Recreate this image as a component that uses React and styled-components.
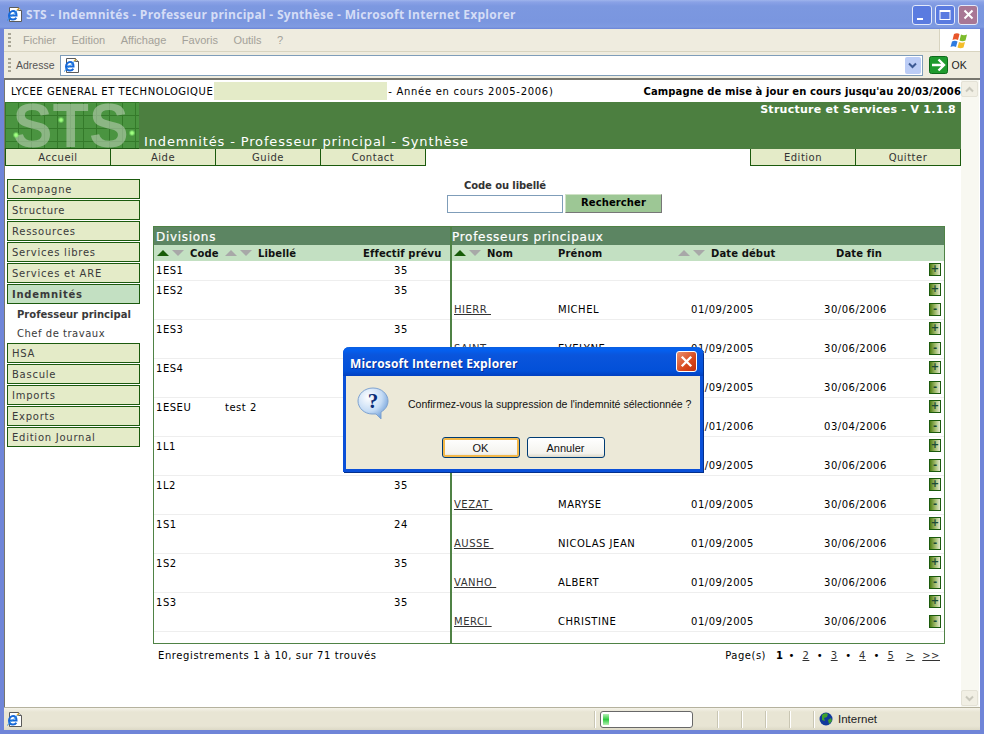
import React from "react"
import styled, { createGlobalStyle } from "styled-components"

const Global = createGlobalStyle`
  html, body { margin: 0; padding: 0; background: #6f85d8; }
  body { font-family: "DejaVu Sans", Verdana, sans-serif; font-size: 10px; }
  #root { width: 984px; height: 734px; overflow: hidden; }
  * { box-sizing: border-box; }
`

const Win = styled.div`
  width: 984px;
  height: 734px;
  position: relative;
  display: flex;
  flex-direction: column;
  background: #6f85d8;
  padding: 0 4px 4px 4px;
`

const TitleBar = styled.div`
  height: 29px;
  margin: 0 -4px;
  padding: 0 6px 0 6px;
  display: flex;
  align-items: center;
  gap: 3px;
  background: linear-gradient(#9fb4ec 0, #8aa2e6 2px, #7c98e0 6px, #7a96df 22px, #7f9be2 27px, #6a84d6 29px);
`

const TitleText = styled.div`
  flex: 1;
  font-family: "Open Sans", sans-serif;
  font-weight: 700;
  font-size: 12px;
  letter-spacing: 0.28px;
  color: #d5ddf6;
  white-space: nowrap;
`

const WinBtn = styled.div`
  width: 20px;
  height: 20px;
  border: 1px solid #e3e9fa;
  border-radius: 3px;
  background: ${p => (p.$close ? "#a87795" : "#5a7be0")};
  display: flex;
  align-items: center;
  justify-content: center;
`

const MenuBar = styled.div`
  height: 23px;
  display: flex;
  align-items: center;
  background: #efecdf;
  border-bottom: 1px solid #d8d4c0;
  color: #a3a199;
  font-family: "Liberation Sans", sans-serif;
  font-size: 11px;
`

const Grip = styled.div`
  width: 3px;
  height: 15px;
  margin: 0 12px 0 4px;
  background: repeating-linear-gradient(#a8a595 0 2px, transparent 2px 4px);
`

const MenuItem = styled.span`
  margin-right: 15.5px;
`

const MenuFill = styled.div`
  flex: 1;
`

const FlagBox = styled.div`
  width: 41px;
  height: 22px;
  background: #fff;
  display: flex;
  align-items: center;
  justify-content: center;
  border-left: 1px solid #d8d4c0;
`

const AddressBar = styled.div`
  height: 26px;
  display: flex;
  align-items: center;
  background: #efecdf;
  font-family: "Liberation Sans", sans-serif;
  font-size: 10.5px;
  color: #555;
`

const AddressGrip = styled(Grip)`
  margin-right: 5px;
`

const AddressField = styled.div`
  margin-left: 5px;
  width: 863px;
  height: 21px;
  background: #fff;
  border: 1px solid #7f9db9;
  display: flex;
  align-items: center;
  justify-content: space-between;
  padding: 0 1px 0 2px;
`

const ComboBtn = styled.div`
  width: 16px;
  height: 17px;
  border-radius: 2px;
  background: #bccdf6;
  display: flex;
  align-items: center;
  justify-content: center;
`

const GoBtn = styled.div`
  display: flex;
  align-items: center;
  gap: 4px;
  margin-left: 6px;
  color: #222;
`

const Content = styled.div`
  flex: 1;
  min-height: 0;
  display: flex;
  background: #fff;
  border-top: 2px solid #77766e;
  border-left: 1px solid #77766e;
`

const Page = styled.div`
  width: 956px;
  display: flex;
  flex-direction: column;
  color: #000;
  letter-spacing: 0.52px;
`

const InfoRow = styled.div`
  height: 22px;
  display: flex;
  align-items: center;
  padding-left: 6px;
  white-space: nowrap;
  letter-spacing: 0.55px;
`

const School = styled.span`
  display: inline-block;
  width: 173px;
  height: 18px;
  margin: 0 1px 0 1px;
  background: #e4ebc8;
`

const Year = styled.span`
  white-space: pre;
  letter-spacing: 0.7px;
`

const Campaign = styled.b`
  margin-left: auto;
  letter-spacing: 0.1px;
`

const Banner = styled.div`
  height: 47px;
  display: flex;
  background: #4c7f40;
  color: #fff;
`

const BannerTitle = styled.div`
  align-self: flex-end;
  margin-left: 5px;
  font-size: 13px;
  line-height: 15px;
  letter-spacing: 0.85px;
  white-space: nowrap;
  flex: 1;
`

const Version = styled.div`
  font-weight: 700;
  font-size: 11px;
  padding: 1px 5px 0 0;
  letter-spacing: 0.27px;
  white-space: nowrap;
`

const Tabs = styled.div`
  height: 17px;
  display: flex;
  justify-content: space-between;
`

const TabGroup = styled.div`
  display: flex;
`

const Tab = styled.div`
  width: ${p => (p.$first ? 106 : 105)}px;
  height: 17px;
  background: #e4ebc8;
  border-right: 1px solid #1b5a0d;
  border-bottom: 1px solid #1b5a0d;
  ${p => p.$first && "border-left: 1px solid #1b5a0d;"}
  color: #333;
  text-align: center;
  line-height: 18px;
`

const Body = styled.div`
  flex: 1;
  display: flex;
`

const Side = styled.div`
  width: 133px;
  margin: 13px 0 0 2px;
  color: #3a3a3a;
`

const SideItem = styled.div`
  height: 20px;
  margin-bottom: 1px;
  padding-left: 4px;
  line-height: 19.5px;
  border: 1px solid #1b5a0d;
  background: ${p => (p.$active ? "#c3e0c2" : "#e4ebc8")};
  font-weight: ${p => (p.$active ? 700 : 400)};
  letter-spacing: 0.75px;
`

const SubItem = styled.div`
  height: 19px;
  padding-left: 10px;
  line-height: 19px;
  white-space: nowrap;
  font-weight: ${p => (p.$active ? 700 : 400)};
  letter-spacing: ${p => (p.$active ? 0 : 0.52)}px;
`

const Main = styled.div`
  margin-left: 13px;
  width: 792px;
  display: flex;
  flex-direction: column;
`

const Search = styled.div`
  height: 47px;
  margin-top: 13px;
  padding-left: 294px;
  display: grid;
  grid-template-columns: 118px 97px;
  grid-template-rows: 15px 19px;
  align-items: center;
`

const SearchLabel = styled.label`
  grid-column: 1 / 3;
  padding: 0 0 2px 17px;
  font-weight: 700;
  color: #333;
  letter-spacing: -0.1px;
`

const SearchInput = styled.input`
  width: 116px;
  height: 18px;
  border: 1px solid #7f9db9;
  padding: 0;
  background: #fff;
`

const SearchBtn = styled.button`
  width: 97px;
  height: 19px;
  padding: 0 0 2px;
  border: 1px solid;
  border-color: #cfe2c6 #777 #777 #cfe2c6;
  background: #9dc795;
  font: 700 10px "DejaVu Sans", sans-serif;
  letter-spacing: 0.1px;
  color: #000;
`

const Table = styled.div`
  height: 418px;
  display: flex;
  border: 1px solid #4f8245;
  border-top: 0;
`

const Panel = styled.div`
  width: ${p => p.$w}px;
  ${p => p.$line && "border-right: 2px solid #4f8245;"}
`

const PanelTitle = styled.div`
  height: 19px;
  background: #5c8562;
  border-top: 1px solid #4f8245;
  color: #fff;
  font-size: 12px;
  line-height: 20px;
  padding-left: ${p => p.$pad}px;
  letter-spacing: 0.7px;
  -webkit-text-stroke: 0.2px #fff;
`

const Heads = styled.div`
  height: 16px;
  background: #c3e0c2;
  display: grid;
  grid-template-columns: ${p => p.$cols};
  align-items: center;
  font-weight: 700;
  color: #111;
  letter-spacing: 0.12px;
  white-space: nowrap;
`

const Head = styled.div`
  display: flex;
  align-items: center;
  gap: 6px;
`

const Arrows = styled.span`
  display: inline-flex;
  gap: 3px;
`

const Arrow = styled.i`
  width: 0;
  height: 0;
  border-left: 6px solid transparent;
  border-right: 6px solid transparent;
  ${p => (p.$down ? "border-top" : "border-bottom")}: 6px solid ${p => p.$color};
`

const LeftRow = styled.div`
  height: ${p => (p.$first ? 20 : 39)}px;
  border-bottom: 1px solid #eeeeee;
  display: grid;
  grid-template-columns: 69px 169px auto;
  padding: 4px 0 0 2px;
`

const RightRow = styled.div`
  height: ${p => (p.$first ? 20 : 39)}px;
  border-bottom: 1px solid #eeeeee;
  display: grid;
  grid-template-columns: 104px 133px 133px 105px 12px;
  padding-left: 2px;
  align-items: end;
`

const Cell = styled.div`
  padding-bottom: 4px;
  white-space: nowrap;
`

const NameLink = styled.a`
  color: #333;
  text-decoration: underline;
  white-space: pre;
`

const Toggles = styled.div`
  display: flex;
  flex-direction: column;
  justify-content: space-between;
  height: 100%;
  padding: 2px 0 3px;
`

const Toggle = styled.div`
  width: 12px;
  height: 13px;
  border: 1px solid #1b5a0d;
  background: linear-gradient(90deg, #4e7d14, #9db868 50%, #e4ead0);
  color: #1d4a34;
  font: 700 10px/10px "DejaVu Sans", sans-serif;
  text-align: center;
  letter-spacing: 0;
`

const Foot = styled.div`
  display: flex;
  justify-content: space-between;
  padding: 6px 5px 0;
`

const FootText = styled.span`
  letter-spacing: 0.6px;
`

const Pager = styled.div`
  display: flex;
  gap: 7.5px;
`

const CurrentPage = styled.b`
  margin: 0 -2.5px 0 2.5px;
`

const PageLink = styled.a`
  color: #333;
  text-decoration: underline;
  margin-left: ${p => p.$gap || 0}px;
`

const ScrollBar = styled.div`
  width: 18px;
  background: #f8f8f1;
  display: flex;
  flex-direction: column;
  justify-content: space-between;
  padding: 1px 0 1px;
`

const ScrollBtn = styled.div`
  width: 17px;
  height: 16px;
  background: #f1efe4;
  border: 1px solid #e4e2d6;
  border-radius: 2px;
  display: flex;
  align-items: center;
  justify-content: center;
`

const StatusBar = styled.div`
  height: 23px;
  display: flex;
  align-items: center;
  background: linear-gradient(#f4f2e8, #e8e5d4 4px, #e8e5d4 18px, #dcd9c6);
  border-top: 1px solid #b5b29e;
  font-family: "Liberation Sans", sans-serif;
  font-size: 11.5px;
  color: #222;
`

const StatusIcon = styled.div`
  width: 590px;
  padding-left: 2px;
  display: flex;
  align-items: center;
`

const Sep = styled.span`
  width: 1px;
  height: 17px;
  background: #c9c6b3;
  box-shadow: 1px 0 #fff;
  margin-right: ${p => p.$m}px;
`

const Progress = styled.div`
  width: 93px;
  height: 17px;
  margin-right: 24px;
  border: 1px solid #686868;
  border-radius: 3px;
  background: #fff;
  padding: 2px;
`

const ProgressFill = styled.div`
  width: 6px;
  height: 100%;
  background: linear-gradient(#b5f0b5, #2ecb3f 50%, #b5f0b5);
`

const Zone = styled.div`
  flex: 1;
  display: flex;
  align-items: center;
  gap: 5px;
`

const Dialog = styled.div`
  position: absolute;
  left: 343px;
  top: 347px;
  width: 360px;
  height: 125px;
  background: #ece9d8;
  border: 3px solid #0a50d8;
  border-top: 0;
  border-radius: 6px 6px 0 0;
  box-shadow: 1px 1px 0 #04308c;
`

const DialogTitle = styled.div`
  height: 29px;
  margin: 0 -3px;
  padding: 0 6px 0 7px;
  display: flex;
  align-items: center;
  justify-content: space-between;
  border-radius: 6px 6px 0 0;
  background: linear-gradient(#0a5fe0, #0460f0 3px, #0a55dc 8px, #0250d8 24px, #0240c0);
  color: #fff;
  font-family: "Open Sans", sans-serif;
  font-weight: 700;
  font-size: 12px;
  letter-spacing: 0.15px;
  text-shadow: 1px 1px 0 #0a2f96;
`

const DialogCaption = styled.span`
  padding-top: 3px;
`

const CloseBtn = styled.div`
  width: 21px;
  height: 21px;
  border: 1px solid #fff;
  border-radius: 3px;
  background: linear-gradient(135deg, #e89070, #d8481c 60%, #c03010);
  display: flex;
  align-items: center;
  justify-content: center;
`

const DialogBody = styled.div`
  display: flex;
  align-items: center;
  gap: 19px;
  padding: 11px 0 0 11px;
  font-family: "Liberation Sans", sans-serif;
  font-size: 10.55px;
  color: #111;
  white-space: nowrap;
`

const DialogBtns = styled.div`
  display: flex;
  justify-content: center;
  gap: 7px;
  margin-top: 17px;
`

const DialogBtn = styled.button`
  width: 78px;
  height: 21px;
  padding: 0;
  border: 1px solid #003c74;
  border-radius: 3px;
  background: linear-gradient(#ffffff, #f4f3ee 80%, #dcd8c8);
  font-family: "Liberation Sans", sans-serif;
  font-size: 11px;
  color: #111;
  ${p => p.$focus && "box-shadow: inset 0 0 0 2px #f2b84a;"}
`

const IeIcon = ({ size = 17 }) => (
  <svg width={size} height={size} viewBox="0 0 17 17">
    <path d="M3.500 1.500h9l3 3v11h-12z" fill="#fff" stroke="#5a5a5a" />
    <path d="M12.500 1.500v3h3" fill="#d8d8d8" stroke="#5a5a5a" />
    <path d="M3 9.500h7.500c0-3-1.500-4.500-3.500-4.500S3 7 3 9.500s1.700 4 4 4c1.500 0 2.700-.7 3.300-1.800" fill="none" stroke="#1668d8" strokeWidth="2" />
    <path d="M1 14.500C3 13 9 6 12.500 3.500" fill="none" stroke="#2f8fe8" strokeWidth="1" />
    <path d="M11 4l2-1.500" stroke="#e8a820" strokeWidth="1.500" />
  </svg>
)

const StsLogo = () => (
  <svg width="134" height="47" viewBox="0 0 134 47">
    <defs>
      <pattern id="stsgrid" width="13" height="13" patternUnits="userSpaceOnUse">
        <rect width="13" height="13" fill="#4a9440" />
        <path d="M0 .5h13M.5 0v13" stroke="#347a2a" />
      </pattern>
      <radialGradient id="stsdot">
        <stop offset="0.35" stopColor="#a0ff80" />
        <stop offset="1" stopColor="#6fe060" stopOpacity="0" />
      </radialGradient>
    </defs>
    <rect width="134" height="47" fill="url(#stsgrid)" />
    <text x="8" y="45" fontFamily="Liberation Sans, sans-serif" fontWeight="700" fontSize="63" fill="#b5ccae" fillOpacity="0.62" textLength="116" lengthAdjust="spacingAndGlyphs">STS</text>
    <circle cx="56" cy="18" r="3.500" fill="url(#stsdot)" />
    <circle cx="11" cy="33" r="3.500" fill="url(#stsdot)" />
    <circle cx="127" cy="31" r="3.500" fill="url(#stsdot)" />
    <path d="M0 46.500h134" stroke="#1f5a14" />
  </svg>
)

const Flag = () => (
  <svg width="20" height="19" viewBox="0 0 20 19">
    <path d="M4 3c2-1 4-1 5.500 0l-1.500 6c-2-1-3.500-1-5.500 0z" fill="#e8562a" />
    <path d="M11 3.500c2 1 4 1 6 0l-1.500 6c-2 1-4 1-6 0z" fill="#7dbb2c" />
    <path d="M2 10.500c2-1 3.500-1 5.500 0L6 16c-2-1-3.500-1-5.500 0z" fill="#2f7be0" />
    <path d="M9 11c2 1 4 1 6 0l-1.500 5.500c-2 1-4 1-6 0z" fill="#f4bd2a" />
  </svg>
)

const GoIcon = () => (
  <svg width="19" height="18" viewBox="0 0 19 18">
    <rect x="0.500" y="0.500" width="18" height="17" rx="2" fill="#1f9a2e" stroke="#0d6a1a" />
    <path d="M3 9h11M9.500 3.500L15 9l-5.500 5.500" stroke="#fff" strokeWidth="2.400" fill="none" />
  </svg>
)

const Chevron = ({ up, color }) => (
  <svg width="9" height="7" viewBox="0 0 9 7">
    <path d={up ? "M1 5.500L4.500 2 8 5.500" : "M1 1.500L4.500 5 8 1.500"} stroke={color} strokeWidth="2" fill="none" />
  </svg>
)

const Cross = ({ size = 11 }) => (
  <svg width={size} height={size} viewBox="0 0 11 11">
    <path d="M1.500 1.500l8 8M9.500 1.500l-8 8" stroke="#fff" strokeWidth="2" />
  </svg>
)

const Question = () => (
  <svg width="32" height="33" viewBox="0 0 32 33">
    <defs>
      <radialGradient id="bal" cx="35%" cy="30%" r="75%">
        <stop offset="0" stopColor="#ffffff" />
        <stop offset="0.6" stopColor="#c5dcf5" />
        <stop offset="1" stopColor="#6f9ed8" />
      </radialGradient>
    </defs>
    <path d="M16 1C7.500 1 1 7 1 14s6.500 13 14 13h4l5 5 0-7c4.500-2.500 7-6.500 7-11C31 7 24.500 1 16 1z" fill="url(#bal)" stroke="#7fa3d0" />
    <text x="16" y="21" fontFamily="Liberation Serif, serif" fontWeight="700" fontSize="21" fill="#0a2d78" textAnchor="middle">?</text>
  </svg>
)

const Globe = () => (
  <svg width="14" height="14" viewBox="0 0 14 14">
    <circle cx="7" cy="7" r="6.500" fill="#123a9c" />
    <path d="M3 3c2-2 5-2 6-1L8 5 5 6 6 9 3 8zM9 8l3-2 1 3-3 3z" fill="#3fa02c" />
  </svg>
)

const Sort = ({ active }) => (
  <Arrows>
    <Arrow $color={active ? "#175c08" : "#a8a8a8"} />
    <Arrow $down $color="#a8a8a8" />
  </Arrows>
)

const sideTop = ["Campagne", "Structure", "Ressources", "Services libres", "Services et ARE"]
const sideBottom = ["HSA", "Bascule", "Imports", "Exports", "Edition Journal"]

const divisions = [
  ["1ES1", "", "35"],
  ["1ES2", "", "35"],
  ["1ES3", "", "35"],
  ["1ES4", "", ""],
  ["1ESEU", "test 2", ""],
  ["1L1", "", ""],
  ["1L2", "", "35"],
  ["1S1", "", "24"],
  ["1S2", "", "35"],
  ["1S3", "", "35"],
]

const profs = [
  null,
  ["HIERR ", "MICHEL", "01/09/2005", "30/06/2006"],
  ["SAINT ", "EVELYNE", "01/09/2005", "30/06/2006"],
  ["", "", "01/09/2005", "30/06/2006"],
  ["", "", "01/01/2006", "03/04/2006"],
  ["", "", "01/09/2005", "30/06/2006"],
  ["VEZAT ", "MARYSE", "01/09/2005", "30/06/2006"],
  ["AUSSE ", "NICOLAS JEAN", "01/09/2005", "30/06/2006"],
  ["VANHO ", "ALBERT", "01/09/2005", "30/06/2006"],
  ["MERCI ", "CHRISTINE", "01/09/2005", "30/06/2006"],
]

export default function App() {
  return (
    <Win>
      <Global />
      <TitleBar>
        <IeIcon />
        <TitleText>STS - Indemnités - Professeur principal - Synthèse - Microsoft Internet Explorer</TitleText>
        <WinBtn>
          <svg width="12" height="12" viewBox="0 0 12 12"><rect x="1" y="9" width="6" height="2" fill="#fff" /></svg>
        </WinBtn>
        <WinBtn>
          <svg width="12" height="12" viewBox="0 0 12 12"><rect x="1" y="1.500" width="10" height="9" fill="none" stroke="#fff" /><rect x="1" y="1" width="10" height="2" fill="#fff" /></svg>
        </WinBtn>
        <WinBtn $close><Cross /></WinBtn>
      </TitleBar>
      <MenuBar>
        <Grip />
        {["Fichier", "Edition", "Affichage", "Favoris", "Outils", "?"].map(m => (
          <MenuItem key={m}>{m}</MenuItem>
        ))}
        <MenuFill />
        <FlagBox><Flag /></FlagBox>
      </MenuBar>
      <AddressBar>
        <AddressGrip />
        Adresse
        <AddressField>
          <IeIcon />
          <ComboBtn><Chevron color="#3d5a94" /></ComboBtn>
        </AddressField>
        <GoBtn><GoIcon />OK</GoBtn>
      </AddressBar>
      <Content>
        <Page>
          <InfoRow>
            LYCEE GENERAL ET TECHNOLOGIQUE<School /><Year>- Année en cours 2005-2006)</Year>
            <Campaign>Campagne de mise à jour en cours jusqu'au 20/03/2006</Campaign>
          </InfoRow>
          <Banner>
            <StsLogo />
            <BannerTitle>Indemnités - Professeur principal - Synthèse</BannerTitle>
            <Version>Structure et Services - V 1.1.8</Version>
          </Banner>
          <Tabs>
            <TabGroup>
              {["Accueil", "Aide", "Guide", "Contact"].map((t, i) => (
                <Tab key={t} $first={i === 0}>{t}</Tab>
              ))}
            </TabGroup>
            <TabGroup>
              <Tab $first>Edition</Tab>
              <Tab>Quitter</Tab>
            </TabGroup>
          </Tabs>
          <Body>
            <Side>
              {sideTop.map(s => <SideItem key={s}>{s}</SideItem>)}
              <SideItem $active>Indemnités</SideItem>
              <SubItem $active>Professeur principal</SubItem>
              <SubItem>Chef de travaux</SubItem>
              {sideBottom.map(s => <SideItem key={s}>{s}</SideItem>)}
            </Side>
            <Main>
              <Search>
                <SearchLabel>Code ou libellé</SearchLabel>
                <SearchInput />
                <SearchBtn>Rechercher</SearchBtn>
              </Search>
              <Table>
                <Panel $w={298} $line>
                  <PanelTitle $pad={2}>Divisions</PanelTitle>
                  <Heads $cols="3px 68px 138px auto">
                    <span />
                    <Head><Sort active />Code</Head>
                    <Head><Sort />Libellé</Head>
                    <Head>Effectif prévu</Head>
                  </Heads>
                  {divisions.map((d, i) => (
                    <LeftRow key={d[0]} $first={i === 0}>
                      <span>{d[0]}</span>
                      <span>{d[1]}</span>
                      <span>{d[2]}</span>
                    </LeftRow>
                  ))}
                </Panel>
                <Panel $w={492}>
                  <PanelTitle $pad={0}>Professeurs principaux</PanelTitle>
                  <Heads $cols="2px 104px 120px 158px auto">
                    <span />
                    <Head><Sort active />Nom</Head>
                    <Head>Prénom</Head>
                    <Head><Sort />Date début</Head>
                    <Head>Date fin</Head>
                  </Heads>
                  {profs.map((p, i) => (
                    <RightRow key={i} $first={i === 0}>
                      <Cell>{p && <NameLink>{p[0]}</NameLink>}</Cell>
                      <Cell>{p && p[1]}</Cell>
                      <Cell>{p && p[2]}</Cell>
                      <Cell>{p && p[3]}</Cell>
                      <Toggles>
                        <Toggle>+</Toggle>
                        {p && <Toggle>-</Toggle>}
                      </Toggles>
                    </RightRow>
                  ))}
                </Panel>
              </Table>
              <Foot>
                <FootText>Enregistrements 1 à 10, sur 71 trouvés</FootText>
                <Pager>
                  <span>Page(s)</span>
                  <CurrentPage>1</CurrentPage>•<PageLink>2</PageLink>•<PageLink>3</PageLink>•<PageLink>4</PageLink>•<PageLink>5</PageLink>
                  <PageLink $gap={4}>&gt;</PageLink>
                  <PageLink>&gt;&gt;</PageLink>
                </Pager>
              </Foot>
            </Main>
          </Body>
        </Page>
        <ScrollBar>
          <ScrollBtn><Chevron up color="#c9c8bc" /></ScrollBtn>
          <ScrollBtn><Chevron color="#c9c8bc" /></ScrollBtn>
        </ScrollBar>
      </Content>
      <StatusBar>
        <StatusIcon><IeIcon /></StatusIcon>
        <Sep $m={5} />
        <Progress><ProgressFill /></Progress>
        <Sep $m={23} />
        <Sep $m={23} />
        <Sep $m={23} />
        <Sep $m={23} />
        <Sep $m={5} />
        <Zone><Globe />Internet</Zone>
      </StatusBar>
      <Dialog>
        <DialogTitle>
          <DialogCaption>Microsoft Internet Explorer</DialogCaption>
          <CloseBtn><Cross size={13} /></CloseBtn>
        </DialogTitle>
        <DialogBody>
          <Question />
          Confirmez-vous la suppression de l'indemnité sélectionnée ?
        </DialogBody>
        <DialogBtns>
          <DialogBtn $focus>OK</DialogBtn>
          <DialogBtn>Annuler</DialogBtn>
        </DialogBtns>
      </Dialog>
    </Win>
  )
}
